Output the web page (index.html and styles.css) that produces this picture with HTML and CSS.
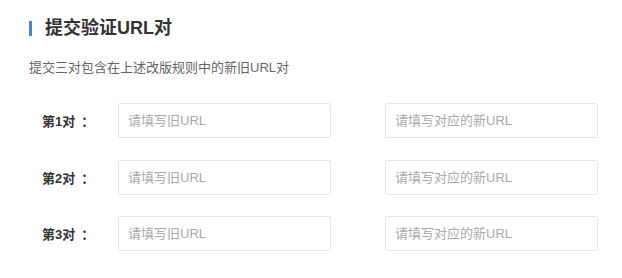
FILE: index.html
```html
<!DOCTYPE html>
<html lang="zh">
<head>
<meta charset="utf-8">
<title>提交验证URL对</title>
<link rel="stylesheet" href="styles.css">
</head>
<body>
<div class="page">
  <div class="header">
    <span class="bar"></span>
    <h2 class="title">提交验证URL对</h2>
  </div>
  <p class="desc">提交三对包含在上述改版规则中的新旧URL对</p>
  <div class="form">
    <div class="row">
      <label class="label">第1对<span class="colon">：</span></label>
      <input class="field" type="text" placeholder="请填写旧URL">
      <input class="field" type="text" placeholder="请填写对应的新URL">
    </div>
    <div class="row">
      <label class="label">第2对<span class="colon">：</span></label>
      <input class="field" type="text" placeholder="请填写旧URL">
      <input class="field" type="text" placeholder="请填写对应的新URL">
    </div>
    <div class="row">
      <label class="label">第3对<span class="colon">：</span></label>
      <input class="field" type="text" placeholder="请填写旧URL">
      <input class="field" type="text" placeholder="请填写对应的新URL">
    </div>
  </div>
</div>
</body>
</html>
```
FILE: styles.css
```css
html, body {
  margin: 0;
  background: #ffffff;
}
body {
  font-family: "Liberation Sans", "Noto Sans CJK SC", sans-serif;
  color: #333333;
}
.page {
  padding: 16px 0 0 29px;
}
.header {
  display: flex;
  align-items: center;
  gap: 13px;
  height: 24px;
}
.bar {
  width: 3px;
  height: 15px;
  background: #4a7fd6;
}
.title {
  margin: 0;
  font-size: 18px;
  line-height: 24px;
  font-weight: bold;
  color: #333333;
}
.desc {
  margin: 19px 0 0 0;
  font-size: 13px;
  line-height: 18px;
  color: #666666;
}
.form {
  margin-top: 26px;
  display: flex;
  flex-direction: column;
  gap: 21.5px;
}
.row {
  display: flex;
  align-items: center;
}
.label {
  width: 89px;
  padding-left: 13px;
  box-sizing: border-box;
  font-size: 13px;
  font-weight: bold;
  color: #333333;
}
.colon {
  margin-left: 6px;
}
.field {
  width: 213px;
  height: 35px;
  box-sizing: border-box;
  border: 1px solid #e6e6e6;
  border-radius: 2px;
  padding: 0 9px;
  font-family: "Liberation Sans", "Noto Sans CJK SC", sans-serif;
  font-size: 13px;
  color: #333333;
  background: #ffffff;
  outline: none;
}
.field + .field {
  margin-left: 54px;
}
.field::placeholder {
  color: #a9a9a9;
}
```
